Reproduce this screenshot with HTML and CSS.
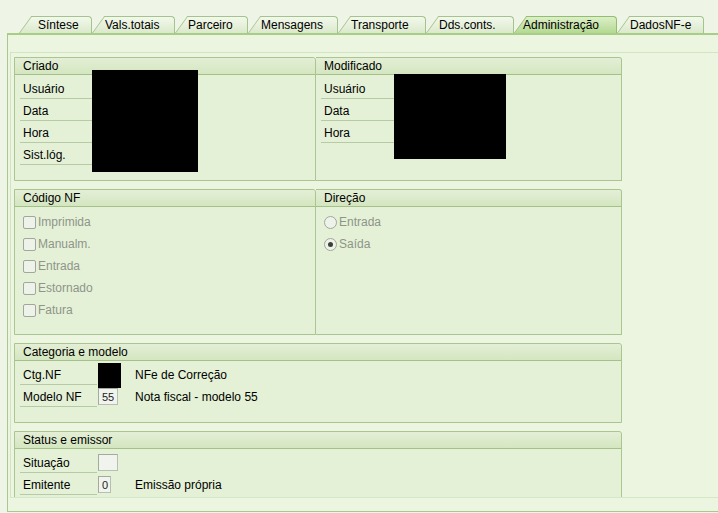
FILE: index.html
```html
<!DOCTYPE html>
<html lang="pt">
<head>
    <meta charset="UTF-8">
    <title>Nota fiscal - Administração</title>
    <link rel="stylesheet" href="styles.css">
</head>
<body>
    <div class="screen">
        <div class="tabs">
            <div class="tab first" style="width: 73px">Síntese</div>
            <div class="tab" style="width: 83px">Vals.totais</div>
            <div class="tab" style="width: 73px">Parceiro</div>
            <div class="tab" style="width: 90px">Mensagens</div>
            <div class="tab" style="width: 88px">Transporte</div>
            <div class="tab" style="width: 88px">Dds.conts.</div>
            <div class="tab active" style="width: 103px">Administração</div>
            <div class="tab" style="width: 87px">DadosNF-e</div>
        </div>

        <div class="panel">
            <div class="scroll">
                <div class="pair">
                    <section class="group">
                        <div class="group-head">Criado</div>
                        <div class="group-body">
                            <div class="row"><span class="lbl">Usuário</span></div>
                            <div class="row"><span class="lbl">Data</span></div>
                            <div class="row"><span class="lbl">Hora</span></div>
                            <div class="row"><span class="lbl">Sist.lóg.</span></div>
                        </div>
                        <div class="redact redact-criado"></div>
                    </section>
                    <section class="group right">
                        <div class="group-head">Modificado</div>
                        <div class="group-body">
                            <div class="row"><span class="lbl">Usuário</span></div>
                            <div class="row"><span class="lbl">Data</span></div>
                            <div class="row"><span class="lbl">Hora</span></div>
                        </div>
                        <div class="redact redact-modif"></div>
                    </section>
                </div>

                <div class="pair">
                    <section class="group">
                        <div class="group-head">Código NF</div>
                        <div class="group-body opts">
                            <div class="opt"><span class="cb"></span>Imprimida</div>
                            <div class="opt"><span class="cb"></span>Manualm.</div>
                            <div class="opt"><span class="cb"></span>Entrada</div>
                            <div class="opt"><span class="cb"></span>Estornado</div>
                            <div class="opt"><span class="cb"></span>Fatura</div>
                        </div>
                    </section>
                    <section class="group right">
                        <div class="group-head">Direção</div>
                        <div class="group-body opts">
                            <div class="opt"><span class="rb"></span>Entrada</div>
                            <div class="opt"><span class="rb on"></span>Saída</div>
                        </div>
                    </section>
                </div>

                <section class="group">
                    <div class="group-head">Categoria e modelo</div>
                    <div class="group-body">
                        <div class="row"><span class="lbl">Ctg.NF</span><span class="cell"></span><span class="desc">NFe de Correção</span></div>
                        <div class="row"><span class="lbl">Modelo NF</span><span class="cell"><span class="inp">55</span></span><span class="desc">Nota fiscal - modelo 55</span></div>
                    </div>
                    <div class="redact redact-ctg"></div>
                </section>

                <section class="group">
                    <div class="group-head">Status e emissor</div>
                    <div class="group-body">
                        <div class="row"><span class="lbl">Situação</span><span class="cell"><span class="inp"></span></span></div>
                        <div class="row"><span class="lbl">Emitente</span><span class="cell"><span class="inp narrow">0</span></span><span class="desc">Emissão própria</span></div>
                    </div>
                </section>
            </div>
        </div>
    </div>
</body>
</html>
```

FILE: styles.css
```css
body {
    margin: 0;
    font-family: "Liberation Sans", Arial, sans-serif;
    font-size: 12px;
    color: #000;
    background: #eef5e7;
}
.screen {
    width: 718px;
    height: 513px;
    overflow: hidden;
}

/* tab strip */
.tabs {
    display: flex;
    padding: 16px 0 0 19px;
    height: 17px;
}
.tab {
    position: relative;
    z-index: 0;
    height: 17px;
    line-height: 19px;
    padding-left: 13px;
    box-sizing: border-box;
    white-space: nowrap;
}
.tab.first {
    padding-left: 19px;
}
.tab.active {
    padding-left: 9px;
}
.tab::before,
.tab::after {
    content: '';
    position: absolute;
    top: 0;
    bottom: 0;
    z-index: -1;
    background: linear-gradient(#f3f8ec, #dbe9cb);
    border-top: 1px solid #a5c38c;
}
.tab::before {
    left: 0;
    width: 24px;
    border-left: 1px solid #a5c38c;
    transform: skewX(-36deg);
    transform-origin: 0 100%;
}
.tab::after {
    left: 14px;
    right: 0;
    border-right: 1px solid #a5c38c;
    border-top-right-radius: 4px;
}
.tab.active::before,
.tab.active::after {
    background: linear-gradient(#dcefc8, #b4d991);
    border-color: #93bd6f;
}

/* main panel */
.panel {
    margin-left: 7px;
    height: 476px;
    border-left: 1px solid #a9c88f;
    border-top: 2px solid #a8cd87;
    border-bottom: 1px solid #a9c88f;
    background: #ebf5e0;
}
.scroll {
    margin: 17px 0 0 2px;
    height: 440px;
    padding: 4px 0 0 3px;
    border-left: 1px solid #d3e4c3;
    border-top: 1px solid #d3e4c3;
    border-bottom: 1px solid #d6e6c7;
    overflow: hidden;
    display: flex;
    flex-direction: column;
    gap: 8px;
}
.pair {
    display: flex;
    width: 608px;
}
.pair .group {
    width: 302px;
}
.pair .group.right {
    width: 306px;
    border-left: none;
}

/* group boxes */
.group {
    position: relative;
    width: 608px;
    box-sizing: border-box;
    flex-shrink: 0;
    border: 1px solid #a9c590;
    border-top-right-radius: 3px;
    background: #e4f1d6;
}
.group-head {
    height: 16px;
    line-height: 17px;
    padding-left: 8px;
    border-bottom: 1px solid #a4c18a;
    background: linear-gradient(#e4efd6, #d4e6c0);
    border-top-right-radius: 3px;
}
.group-body {
    padding: 2px 0 15px 5px;
}
.row {
    display: flex;
    height: 22px;
    align-items: flex-start;
}
.lbl {
    width: 74px;
    height: 21px;
    line-height: 25px;
    padding-left: 3px;
    border-bottom: 1px solid #b6caa5;
}
.cell {
    width: 38px;
    padding: 3px 0 0 1px;
    box-sizing: border-box;
}
.inp {
    display: block;
    width: 20px;
    height: 17px;
    box-sizing: border-box;
    border: 1px solid #b7bfb0;
    border-top-color: #a3ab9c;
    border-left-color: #a3ab9c;
    background: #f1f4ee;
    font-size: 11px;
    line-height: 16px;
    padding-left: 3px;
    color: #222;
}
.inp.narrow {
    width: 13px;
    padding-left: 3px;
}
.desc {
    line-height: 25px;
}

/* checkboxes and radios */
.group-body.opts {
    padding: 4px 0 13px 5px;
}
.opt {
    display: flex;
    align-items: center;
    height: 22px;
    color: #8f948b;
}
.cb {
    width: 11px;
    height: 11px;
    margin: 0 2px 0 3px;
    border: 1px solid #a2a69f;
    border-radius: 2px;
    background: #eef3e9;
}
.rb {
    position: relative;
    width: 11px;
    height: 11px;
    margin: 0 2px 0 3px;
    border: 1px solid #a2a69f;
    border-radius: 50%;
    background: #eef3e9;
}
.rb.on::after {
    content: '';
    position: absolute;
    left: 3px;
    top: 3px;
    width: 5px;
    height: 5px;
    border-radius: 50%;
    background: #3d3f3b;
}

/* blacked out values */
.redact {
    position: absolute;
    background: #000;
}
.redact-criado {
    left: 77px;
    top: 12px;
    width: 106px;
    height: 102px;
}
.redact-modif {
    left: 78px;
    top: 16px;
    width: 112px;
    height: 85px;
}
.redact-ctg {
    left: 83px;
    top: 19px;
    width: 23px;
    height: 25px;
}
```
